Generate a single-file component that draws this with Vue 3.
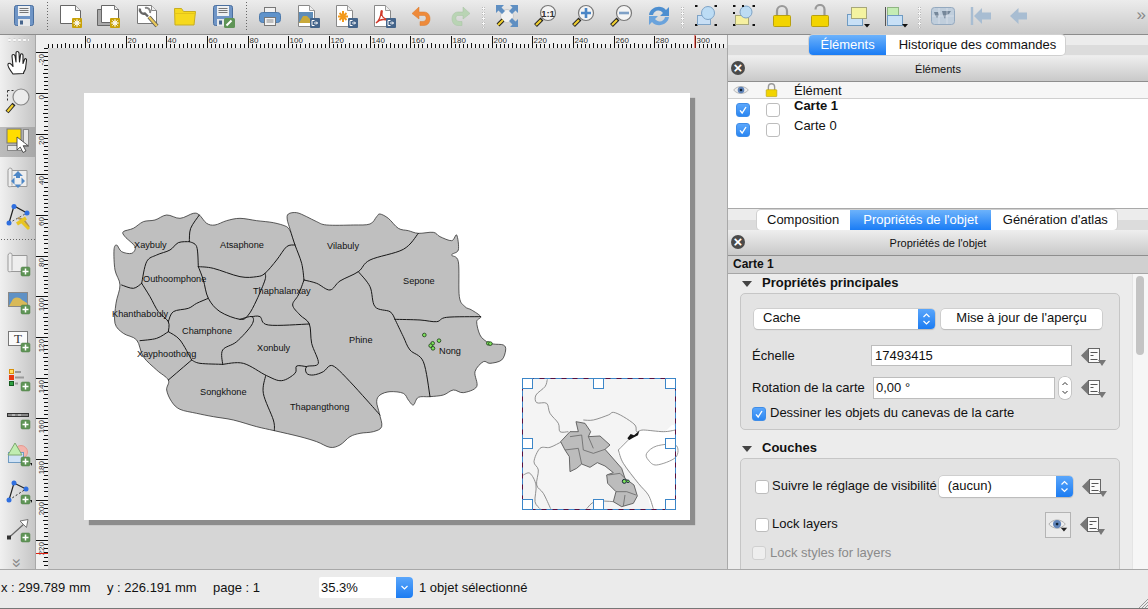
<template>
  <div class="app">
    <div class="toolbar">
      <template v-for="(it, i) in topItems" :key="i">
        <span v-if="it === '|'" class="sep-v"></span>
        <span v-else-if="it === ':'" class="grip-v"></span>
        <span v-else class="tool"><svg viewBox="0 0 24 24" width="24" height="24" v-html="icons[it]"></svg></span>
      </template>
      <span class="more">»</span>
    </div>

    <div class="main">
      <div class="lefttools">
        <span class="grip-h"></span>
        <template v-for="(it, i) in leftItems" :key="i">
          <span v-if="it === '|'" class="sep-h"></span>
          <span v-else class="ltool" :class="{ active: it === 'select' }"><svg viewBox="0 0 28 28" width="28" height="28" v-html="icons[it]"></svg></span>
        </template>
        <span class="chev">»</span>
      </div>

      <div class="workspace">
        <svg class="hruler" width="691" height="13">
          <line v-for="t in hTicks" :key="t.x" :x1="t.x" :x2="t.x" :y1="t.major ? 1 : t.mid ? 8 : 9" y2="13" stroke="#111" />
          <text v-for="t in hLabels" :key="t.mm" :x="t.x + 1.5" y="8" class="rtext">{{ t.mm }}</text>
          <line x1="659" x2="659" y1="0" y2="13" stroke="#e02010" />
        </svg>
        <div class="wsbody">
          <svg class="vruler" width="12" height="521">
            <line v-for="t in vTicks" :key="t.y" :y1="t.y" :y2="t.y" :x1="t.major ? 0 : t.mid ? 7 : 8" x2="12" stroke="#111" />
            <text v-for="t in vLabels" :key="t.mm" x="7.5" :y="t.y + 2" text-anchor="end" :transform="`rotate(-90 7.5 ${t.y + 2})`" class="rtext">{{ t.mm }}</text>
            <line x1="0" x2="12" y1="505.5" y2="505.5" stroke="#e02010" />
          </svg>
          <div class="canvas">
            <div class="sheet">
              <svg viewBox="84 93 606 427" width="606" height="427">
                <g transform="translate(100 200) scale(.33333)">
                  <path :d="smooth(outline, true)" fill="#bfbfbf" stroke="#333" stroke-width="2.4" stroke-linejoin="round" />
                  <path v-for="(b, i) in borders" :key="i" :d="smooth(b)" fill="none" stroke="#161616" stroke-width="3" stroke-linecap="round" />
                  <circle v-for="(d, i) in dots" :key="i" :cx="d[0]" :cy="d[1]" r="5.5" fill="#7fe35c" stroke="#1c3a18" stroke-width="2.4" />
                </g>
                <text v-for="l in labels" :key="l[0]" :x="l[1]" :y="l[2] + 3" class="maptext">{{ l[0] }}</text>

                <g transform="translate(510 370) scale(.33333)">
                  <rect x="37" y="25" width="460" height="393" fill="#f4f4f4" />
                  <path :d="smooth(sea, true)" fill="#fff" />
                  <path v-for="(b, i) in insetLines" :key="i" :d="smooth(b)" fill="none" stroke="#7f7f7f" stroke-width="2.6" />
                  <path :d="smooth(hainan, true)" fill="#fff" stroke="#8a8a8a" stroke-width="2.6" />
                  <path d="M352 205 L362 192 L372 196 L388 182 L384 196 L368 204 L358 210 Z" fill="#151515" />
                  <polygon :points="laos.join(' ')" fill="#bcbcbc" stroke="#555" stroke-width="2.6" stroke-linejoin="round" />
                  <polyline v-for="(b, i) in laosLines" :key="i" :points="b.join(' ')" fill="none" stroke="#666" stroke-width="2.4" />
                  <circle cx="343" cy="334" r="6" fill="#7fe35c" stroke="#123" stroke-width="3" />
                  <circle cx="354" cy="334" r="4" fill="#7fe35c" stroke="#123" stroke-width="2.4" />
                </g>
                <rect x="522.5" y="378.5" width="153" height="131" fill="none" stroke="#5a1040" />
                <rect x="522.5" y="378.5" width="153" height="131" fill="none" stroke="#3c86c8" stroke-dasharray="6 5" />
                <rect v-for="(h, i) in handles" :key="i" :x="h[0] + .5" :y="h[1] + .5" width="10" height="10" fill="#fff" stroke="#3c86c8" />
              </svg>
            </div>
          </div>
        </div>
      </div>

      <div class="panel">
        <div class="tabstrip first">
          <div class="tabs">
            <span class="tab on t-el">Éléments</span>
            <span class="tab t-hist">Historique des commandes</span>
          </div>
        </div>
        <div class="titlebar">
          <span class="closebtn">×</span>
          <span>Éléments</span>
        </div>
        <div class="items">
          <div class="items-head">
            <svg class="h-eye" viewBox="0 0 24 24" width="16" height="16" v-html="icons.eye"></svg>
            <svg class="h-lock" viewBox="0 0 24 24" width="15" height="16" v-html="icons.lock"></svg>
            <span class="h-el">Élément</span>
          </div>
          <div v-for="row in itemRows" :key="row.name" class="item-row">
            <span class="cb on"><svg viewBox="0 0 14 14"><path d="M3.5 7.5 L6 10.5 L10.5 3.5" /></svg></span>
            <span class="cb second"></span>
            <span class="item-name" :class="{ bold: row.bold }">{{ row.name }}</span>
          </div>
        </div>

        <div class="tabstrip second">
          <div class="tabs">
            <span class="tab t-comp">Composition</span>
            <span class="tab on t-prop">Propriétés de l'objet</span>
            <span class="tab t-gen">Génération d'atlas</span>
          </div>
        </div>
        <div class="titlebar">
          <span class="closebtn">×</span>
          <span>Propriétés de l'objet</span>
        </div>
        <div class="objbar">Carte 1</div>

        <div class="scrollarea">
          <div class="scrollcontent">
            <div class="grouphead"><span class="tri"></span><span class="gh">Propriétés principales</span></div>
            <div class="group g1">
              <div class="row r-cache">
                <span class="combo cache">Cache<span class="cend"><svg viewBox="0 0 17 20" width="17" height="20"><path d="M5.5 8 L8.5 5 L11.5 8 M5.5 12 L8.5 15 L11.5 12" /></svg></span></span>
                <span class="btn">Mise à jour de l'aperçu</span>
              </div>
              <div class="row r-scale">
                <span class="lab scale">Échelle</span>
                <span class="input wide">17493415</span>
                <svg class="dd" viewBox="0 0 25 22" width="25" height="22" v-html="icons.dd"></svg>
              </div>
              <div class="row r-rot">
                <span class="lab rot">Rotation de la carte</span>
                <span class="input mid">0,00 °</span>
                <span class="spin"><svg viewBox="0 0 12 22" width="12" height="22"><path d="M3.5 8 L6 5.5 L8.5 8 M3.5 14 L6 16.5 L8.5 14" /></svg></span>
                <svg class="dd d2" viewBox="0 0 25 22" width="25" height="22" v-html="icons.dd"></svg>
              </div>
              <div class="row r-draw">
                <span class="cb on"><svg viewBox="0 0 14 14"><path d="M3.5 7.5 L6 10.5 L10.5 3.5" /></svg></span>
                <span class="lab after up2">Dessiner les objets du canevas de la carte</span>
              </div>
            </div>

            <div class="grouphead second"><span class="tri"></span><span class="gh">Couches</span></div>
            <div class="group g2">
              <div class="row r-follow">
                <span class="cb"></span>
                <span class="lab after up3">Suivre le réglage de visibilité</span>
                <span class="combo aucun">(aucun)<span class="cend"><svg viewBox="0 0 17 21" width="17" height="21"><path d="M5.5 8.5 L8.5 5.5 L11.5 8.5 M5.5 12.5 L8.5 15.5 L11.5 12.5" /></svg></span></span>
                <svg class="dd" viewBox="0 0 25 22" width="25" height="22" v-html="icons.dd"></svg>
              </div>
              <div class="row r-lock">
                <span class="cb"></span>
                <span class="lab after up4">Lock layers</span>
                <span class="eyebtn"><svg viewBox="0 0 24 24" width="22" height="22" v-html="icons.eyemenu"></svg></span>
                <svg class="dd" viewBox="0 0 25 22" width="25" height="22" v-html="icons.dd"></svg>
              </div>
              <div class="row r-styles">
                <span class="cb off"></span>
                <span class="lab after dim">Lock styles for layers</span>
              </div>
            </div>
          </div>
          <div class="scrollbar"><span class="thumb"></span></div>
        </div>
      </div>
    </div>

    <div class="status">
      <span class="st">x : 299.789 mm</span>
      <span class="st">y : 226.191 mm</span>
      <span class="st">page : 1</span>
      <span class="zoomcombo">35.3%<span class="zend"><svg viewBox="0 0 17 21" width="17" height="21"><path d="M5.5 9 L8.5 12 L11.5 9" /></svg></span></span>
      <span class="st-sel">1 objet sélectionné</span>
      <svg class="sizegrip" viewBox="0 0 10 10" width="10" height="10"><path d="M1 10 L10 1 M4 10 L10 4 M7 10 L10 7" /></svg>
    </div>
  </div>
</template>

<script setup>
const topItems = ['save', '|', 'newc', 'dup', 'manage', 'folder', 'saveas', '|', 'print', 'eimg', 'esvg', 'epdf', 'undo', 'redo', ':', 'zfull', 'z11', 'zin', 'zout', 'refresh', ':', 'group', 'ungroup', 'lock', 'unlock', 'raise', 'align', ':', 'atlas', 'first', 'prev']
const leftItems = ['hand', 'zoomtool', 'select', 'movec', 'nodes', '|', 'addmap', 'addimg', 'addtext', 'legend', 'scalebar', 'shape', 'addnodes', 'arrow']

// --- icons ---
const floppy = `<rect x="2.5" y="1.5" width="19" height="20" rx="2" fill="#6f95c6" stroke="#4b6f9e"/><rect x="6" y="2" width="12" height="10" fill="#eef0f2"/><path d="M7.5 4.5h9M7.5 6.5h9M7.5 8.5h9" stroke="#777"/><rect x="6" y="15" width="12" height="7" fill="#e6e8ea"/><rect x="8" y="16.5" width="3" height="4" fill="#47658c"/>`
const doc = (x = 1) => `<path d="M${x + .5} 1.5h15l5 5v13h-20z" fill="#fff" stroke="#666"/><path d="M${x + 15.5} 1.5v5h5" fill="#eee" stroke="#777"/>`
const gear = `<rect x="13" y="14" width="10" height="10" rx="1" fill="#c9a208"/><circle cx="18" cy="19" r="2" fill="none" stroke="#fff"/><path d="M18 15v8M14 19h8M15.2 16.2l5.6 5.6M20.8 16.2l-5.6 5.6" stroke="#fff" stroke-width=".8"/>`
const exportBadge = `<rect x="14" y="14" width="10" height="10" rx="1" fill="#44648a"/><path d="M18.5 16.5h-2.5v5h2.5M18 19h3.5M20 17.5l1.5 1.5l-1.5 1.5" fill="none" stroke="#fff"/>`
const smallDoc = `<path d="M2.5 1.5h11l5 5v16h-16z" fill="#fff" stroke="#888"/><path d="M13.5 1.5v5h5" fill="#eee" stroke="#999"/>`
const lens = (inner) => `<path d="M9 15L2.5 21.5" stroke="#222" stroke-width="4"/><path d="M8 16L3 21" stroke="#f0cf30" stroke-width="2.2"/><circle cx="15" cy="9" r="7.5" fill="#f4f4f4" stroke="#777" stroke-width="1.2"/>${inner}`
const lockBody = `<rect x="3.5" y="11.5" width="17" height="11" rx="1" fill="#f2d400" stroke="#b8a010"/>`
const corners = `<path d="M1 2h2.5M20.5 2h2.5M1 21h2.5M20.5 21h2.5" stroke="#111" stroke-width="2"/>`
const plus = (x = 17, y = 17) => `<rect x="${x}" y="${y}" width="9" height="9" rx="1.5" fill="#5f9456" stroke="#4d7d46" stroke-width=".5"/><path d="M${x + 4.5} ${y + 1.5}v6M${x + 1.5} ${y + 4.5}h6" stroke="#fff" stroke-width="1.5"/>`
const paper = `<path d="M4 5.5c0-3 4-3 4-1v1h15v16h-15c-2 0-4 1-4-1z" fill="#eee" stroke="#999"/><path d="M8 5.5v15" stroke="#aaa"/>`
const blueNode = (x, y) => `<circle cx="${x}" cy="${y}" r="2.5" fill="#2f6fe0"/>`

const icons = {
  save: floppy,
  newc: doc() + gear,
  dup: `<path d="M.5 5.5h15l5 5v11h-20z" fill="#aaa" stroke="#666"/><path d="M4.5 1.5h13l4 4v13h-17z" fill="#fff" stroke="#666"/><path d="M17.5 1.5v4h4" fill="#eee" stroke="#777"/>` + gear,
  manage: `<path d="M2.5 1.5h14l5 5v13h-19z" fill="#fff" stroke="#777"/><path d="M16.5 1.5v5h5" fill="#eee" stroke="#888"/><path d="M5 4.5a4 4 0 0 0 5 5l3 3" fill="none" stroke="#666" stroke-width="2.4"/><path d="M10 4a4 4 0 0 1 5 5" fill="none" stroke="#888" stroke-width="2"/><path d="M14 13l8 9" stroke="#555" stroke-width="4"/><path d="M14 13l8 9" stroke="#e8c85a" stroke-width="2.4"/>`,
  folder: `<path d="M1.5 4.5h7l2 3h12l-1.500 13.500h-19z" fill="#f6d91e" stroke="#c7ad22"/><path d="M1.5 9.5h21" stroke="#e4c41a"/>`,
  saveas: floppy + `<rect x="13" y="14" width="11" height="10" rx="1.5" fill="#5f9456"/><path d="M15.5 21.5l5-5" stroke="#fff" stroke-width="2"/>`,
  print: `<rect x="6.5" y="3.5" width="11" height="7" fill="#f2f2f2" stroke="#777"/><rect x="1.5" y="8.5" width="21" height="10" rx="3" fill="#5f93cb" stroke="#4c79ab"/><rect x="6.5" y="13.5" width="11" height="8" fill="#f3f3f3" stroke="#777"/><path d="M8.5 16h7M8.5 18h7" stroke="#888"/>`,
  eimg: smallDoc + `<rect x="3" y="8" width="14" height="11" fill="#5f8db8"/><path d="M3 19l4-7h4l3 3l3 1v3z" fill="#c9a93a"/>` + exportBadge,
  esvg: smallDoc + `<path d="M9 7v11M4 12.5h10M5.5 9l7 7M12.5 9l-7 7" stroke="#f39a1c" stroke-width="2"/>` + exportBadge,
  epdf: smallDoc + `<path d="M4 19c3-2 5-7 5-11c0-2 2-2 1 1c-1 3 2 6 5 6c2 0 1 2-1 1c-3-1-7 0-10 3z" fill="none" stroke="#d0392b" stroke-width="1.3"/>` + exportBadge,
  undo: `<path d="M9 3L2 9.5L9 15v-3.5h5c3 0 3 6-1 6h-3v4h4c8 0 8-13.5 0-13.5h-5z" fill="#ee8a3a" stroke="#d87a2c" stroke-width=".5"/>`,
  redo: `<path d="M15 3l7 6.5L15 15v-3.5h-5c-3 0-3 6 1 6h3v4h-4c-8 0-8-13.5 0-13.5h5z" fill="#b9d4b4" stroke="#a6c3a2" stroke-width=".5"/>`,
  zfull: `<circle cx="12" cy="12" r="6.5" fill="#f2f2f2" stroke="#ccc"/><path d="M1 1h8l-2.5 2.5L10 7L7 10L3.5 6.5L1 9zM23 1v8l-2.5-2.5L17 10L14 7l3.5-3.5L15 1zM23 23h-8l2.5-2.5L14 17l3-3l3.5 3.5L23 15z" fill="#5f8fc2"/><path d="M8 16L3 21" stroke="#222" stroke-width="4"/><path d="M8 16L3 21" stroke="#f0cf30" stroke-width="2"/>`,
  z11: lens(`<text x="15" y="12.5" text-anchor="middle" font-family="Liberation Sans, sans-serif" font-size="9.5" font-weight="700" fill="#333">1:1</text>`),
  zin: lens(`<path d="M15 4v10M10 9h10" stroke="#4b86c6" stroke-width="2.6"/>`),
  zout: lens(`<path d="M10 9h10" stroke="#7ea0c6" stroke-width="2.6"/>`),
  refresh: `<path d="M2 11C3 3 14 0 19 6l3-3v9h-9l3-3c-3-4-9-3-10 2z" fill="#4e8fd0"/><path d="M22 13c-1 8-12 11-17 5l-3 3v-9h9l-3 3c3 4 9 3 10-2z" fill="#6aa3dc"/>`,
  group: corners + `<rect x="3.5" y="11.5" width="13" height="9" fill="#c8dff5" stroke="#7ea3c6"/><circle cx="14" cy="9" r="6.5" fill="#bcdcf4" stroke="#7ea3c6"/>`,
  ungroup: corners + `<rect x="3.5" y="11.5" width="13" height="9" fill="#f6f0a0" stroke="#a8a878"/><circle cx="14" cy="8" r="6" fill="#bcdcf4" stroke="#7ea3c6"/><path d="M1 9h2M10 2h2" stroke="#111" stroke-width="2"/>`,
  lock: `<path d="M7 12V7a5 5 0 0 1 10 0v5" fill="none" stroke="#999" stroke-width="2.2"/>` + lockBody,
  unlock: `<path d="M7.5 5.5a4.5 4.5 0 0 1 9 0v6.5h-3" fill="none" stroke="#999" stroke-width="2.2"/>` + lockBody,
  raise: `<rect x="1.5" y="10.5" width="15" height="11" fill="#c8e0f6" stroke="#6f9bc2"/><rect x="5.5" y="3.5" width="15" height="11" fill="#f4f3a0" stroke="#a7a77a"/><path d="M18 20h6l-3 3.5z" fill="#111"/>`,
  align: `<path d="M1.5 3v19" stroke="#555"/><rect x="3.5" y="3.5" width="11" height="8" fill="#c4ecb4" stroke="#8fb582"/><rect x="3.5" y="11.5" width="15" height="10" fill="#c8e0f6" stroke="#6f9bc2"/><path d="M18 20h6l-3 3.5z" fill="#111"/>`,
  atlas: `<rect x=".5" y="3.5" width="23" height="17" rx="3" fill="#c0cedc" stroke="#94a9bf"/><path d="M3 8h4l1 3l-2 3l-2-3zM11 7h9l-2 3l-3 1l-1 4l-2-4z" fill="#75879a"/><path d="M8 4v16M16 4v16M1 12h22" stroke="#e0e8f0" stroke-width=".6"/>`,
  first: `<path d="M3 3v18" stroke="#a8bdd2" stroke-width="2.4"/><path d="M5 12l8-8v4.5h9v7h-9V20z" fill="#a8bdd2"/>`,
  prev: `<path d="M3 12l8.5-8v4.5H20v7h-8.5V20z" fill="#a8bdd2"/>`,
  hand: `<path d="M9 26C6 22 3 18 4 16c1-1.5 3-.5 5 2.5L8 8c0-2 2.5-2 3 0l1 6V5c0-2 2.5-2 3 0l.5 9l1-7c.3-2 2.5-1.5 2.5.5v8l1.5-4c.7-1.5 2.5-1 2 1l-1 8c-.3 2-2 3-2 5z" fill="#fff" stroke="#222" stroke-width="1.1" stroke-linejoin="round"/>`,
  zoomtool: `<path d="M3.5 3.5h8M3.5 3.5v12" stroke="#333" stroke-dasharray="2 2" fill="none"/><path d="M10 17L3 25" stroke="#222" stroke-width="4"/><path d="M9 18L3.5 24.5" stroke="#f0cf30" stroke-width="2.2"/><circle cx="17" cy="10" r="8" fill="#ececec" stroke="#888" stroke-width="1.2"/>`,
  select: `<rect x="3.5" y="19.5" width="14" height="5" fill="#e6e6e6" stroke="#888"/><rect x="19.5" y="3.5" width="5" height="17" fill="#e6e6e6" stroke="#888"/><rect x="3" y="3" width="14" height="14" fill="#ffdd00" stroke="#777"/><path d="M13 11v13l3.200-3l2.800 5.500l3-1.500l-2.800-5.300h5z" fill="#fff" stroke="#333" stroke-width=".8"/>`,
  movec: paper + `<path d="M14 6l5 5h-3v2h-4v-2H9zM7 16l3.5-3.5v7zM21 16l-3.5-3.5v7zM14 23l-3.5-3.5h7z" fill="#4d87c7"/>`,
  nodes: `<path d="M5 19L10 2l13 7" fill="none" stroke="#222" stroke-width="1.2"/><path d="M5 19l18-10" stroke="#555" stroke-dasharray="2 2"/><path d="M14 14l6 2l5 7" stroke="#b09050" stroke-width="2" fill="none"/><path d="M13 20l9-6" stroke="#e8c520" stroke-width="3.5" fill="none"/><path d="M17 17l8 8" stroke="#e8c520" stroke-width="3" fill="none"/>` + blueNode(5, 19) + blueNode(10, 2.5) + blueNode(23, 9),
  addmap: paper + plus(),
  addimg: `<rect x="4.5" y="4.5" width="19" height="14" fill="#5f91c5" stroke="#888"/><path d="M5 18l4-7c3-2 6-2 9 1l5 3v3z" fill="#d8b958"/>` + plus(),
  addtext: `<rect x="4.5" y="5.5" width="19" height="14" fill="#fbfbfb" stroke="#777"/><text x="14" y="17" text-anchor="middle" font-family="Liberation Serif, serif" font-size="13" fill="#333">T</text>` + plus(),
  legend: `<rect x="5.5" y="4.5" width="4" height="4" fill="#ffe066" stroke="#d8900a"/><rect x="5" y="10" width="5" height="5" fill="#e83a12"/><rect x="5.5" y="16.5" width="4" height="4" fill="#2ea040" stroke="#145a20"/><path d="M11 7h6M11 12.5h9M11 18.5h3" stroke="#999" stroke-width="2"/>` + plus(),
  scalebar: `<rect x="3.5" y="10.5" width="21" height="3" fill="#888" stroke="#333"/><path d="M8 12h3M14 12h3" stroke="#ddd"/>` + plus(),
  shape: `<circle cx="17" cy="11" r="6.5" fill="#f3b4ac" stroke="#e59a90"/><rect x="4.5" y="11.5" width="15" height="10" fill="#cfe2f5" stroke="#6f9bc2"/><path d="M11 2l7 12H4z" fill="#c0edb0" stroke="#7ea870"/>` + plus(17, 16) + `<path d="M26 22h4l-2 3z" fill="#111"/>`,
  addnodes: `<path d="M5 21L10 4l12 6" fill="none" stroke="#222" stroke-width="1.2"/><path d="M5 21l17-11" stroke="#333" stroke-dasharray="2 2"/>` + blueNode(5, 21) + blueNode(10, 4) + blueNode(22, 10) + plus(17, 16) + `<path d="M26 21h4l-2 3z" fill="#111"/>`,
  arrow: `<path d="M5 20.5L20 7" stroke="#666" stroke-width="1.2"/><rect x="3" y="18.5" width="4" height="4" fill="#333"/><path d="M16 4l8-1.5l-1.5 8z" fill="#fff" stroke="#777"/>` + plus(17, 16),
  eye: `<path d="M1 12c6-7 16-7 22 0c-6 7-16 7-22 0z" fill="#eee" stroke="#999"/><circle cx="12" cy="12" r="5" fill="#5f83b8"/><circle cx="12" cy="12" r="2" fill="#123"/>`,
  eyemenu: `<path d="M2 11c5-6 13-6 18 0c-5 6-13 6-18 0z" fill="#eee" stroke="#aaa"/><circle cx="11" cy="11" r="4.5" fill="#5f83b8"/><circle cx="11" cy="11" r="1.5" fill="#123"/><path d="M15 15h7l-3.5 4z" fill="#222"/>`,
  dd: `<path d="M0 10.5L7 3.5V17.5z" fill="#777"/><rect x="7.5" y="3.5" width="11" height="14" fill="#fafafa" stroke="#666"/><path d="M9.5 7.5h7M9.5 10.5h3M9.5 14.5h7" stroke="#555"/><path d="M17 15h8l-4 6z" fill="#777"/>`
}

// --- rulers (2.033 px per mm) ---
const scale = 2.033
const hTicks = []
for (let mm = -18; mm <= 316; mm += 2) hTicks.push({ x: Math.round(49 + mm * scale) + 0.5, major: mm % 20 === 0, mid: mm % 10 === 0 })
const hLabels = []
for (let mm = 0; mm <= 300; mm += 20) hLabels.push({ mm, x: Math.round(49 + mm * scale) })
const vTicks = []
for (let mm = -22; mm <= 234; mm += 2) vTicks.push({ y: Math.round(45 + mm * scale) + 0.5, major: mm % 20 === 0, mid: mm % 10 === 0 })
const vLabels = []
for (let mm = -20; mm <= 220; mm += 20) vLabels.push({ mm, y: Math.round(45 + mm * scale) })

// --- map data, in coordinates of a 3x crop ---
const east = (a) => a.map(([x, y]) => [x + 720, y])
const outline = [
  [298, 45], [320, 70], [345, 75], [380, 62], [420, 55], [470, 62], [520, 68], [560, 80], [572, 95], [562, 60], [565, 42], [590, 38], [620, 50], [650, 65], [680, 75], [760, 75], [810, 72], [830, 50],
  ...east([[120, 42], [145, 55], [175, 85], [205, 92], [235, 100], [280, 97], [300, 110], [335, 122], [350, 105], [355, 150], [335, 165], [355, 185], [358, 290], [375, 320], [395, 330], [422, 350], [410, 365], [420, 405], [440, 425], [460, 432], [490, 435], [497, 450], [485, 480], [450, 490], [430, 485], [405, 515], [410, 560], [370, 578], [340, 570], [310, 585], [270, 590], [235, 592], [220, 615], [205, 600], [190, 580], [150, 575], [120, 585], [110, 605], [118, 640], [125, 680], [100, 695], [60, 700], [30, 710]]),
  [720, 735], [690, 742], [650, 725], [600, 710], [523, 692], [470, 680], [400, 660], [340, 650], [290, 640], [240, 628], [215, 605], [200, 570], [205, 540], [170, 510], [130, 470], [110, 420], [70, 400], [45, 370], [48, 310], [60, 255], [45, 210], [42, 150], [50, 135], [65, 155], [95, 160], [105, 140], [75, 110], [70, 95], [100, 85], [130, 65], [165, 60], [200, 45], [240, 55], [280, 40]
]
const borders = [
  [[298, 45], [272, 85], [268, 125]],
  [[268, 125], [235, 128], [210, 150], [170, 165], [140, 185], [125, 250]],
  [[125, 250], [100, 265], [65, 255]],
  [[268, 125], [290, 140], [295, 200]],
  [[295, 200], [340, 205], [420, 230], [470, 230], [495, 220], [530, 180], [560, 140], [585, 135]],
  [[572, 95], [585, 135], [605, 190], [612, 240]],
  [[295, 200], [310, 240], [325, 295], [360, 335], [420, 358], [445, 345], [470, 300], [495, 240], [495, 220]],
  [[325, 295], [290, 310], [265, 325], [220, 335], [205, 365]],
  [[125, 250], [150, 290], [175, 335], [205, 365], [205, 395]],
  [[205, 395], [170, 415], [120, 422]],
  [[205, 395], [240, 420], [275, 480]],
  [[275, 480], [205, 540]],
  [[275, 480], [300, 490], [368, 493]],
  [[368, 493], [368, 450], [410, 425], [455, 375], [456, 350], [420, 358]],
  [[456, 350], [480, 350], [505, 375], [628, 372]],
  [[612, 240], [595, 285], [578, 315], [600, 345], [628, 372], [635, 430], [655, 490], [620, 500], [620, 520], [640, 525], [670, 515], [690, 497], [710, 505], [750, 545], [800, 600], [840, 645]],
  [[368, 493], [430, 490], [500, 527], [545, 542], [585, 520], [590, 498], [620, 500]],
  [[497, 527], [490, 580], [520, 660], [523, 692]],
  [[612, 240], [650, 250], [690, 270], ...east([[0, 243], [55, 215], [90, 180], [190, 148], [235, 100]])],
  east([[55, 215], [90, 260], [105, 320], [150, 335], [165, 358]]),
  east([[165, 358], [240, 360], [290, 365], [320, 352], [422, 350]]),
  east([[165, 358], [190, 410], [210, 450], [250, 485], [270, 590]])
]
const dots = east([[253, 405], [278, 430], [297, 422], [272, 437], [279, 445], [445, 430], [451, 431]])
const labels = [
  ['Xaybuly', 134, 245], ['Atsaphone', 220, 245], ['Vilabuly', 327, 246], ['Sepone', 403, 281], ['Outhoomphone', 143, 279],
  ['Thaphalanxay', 253, 291], ['Khanthabouly', 112, 314], ['Phine', 349, 340], ['Champhone', 182, 331], ['Xonbuly', 257, 348],
  ['Nong', 439, 351], ['Xayphoothong', 137, 354], ['Songkhone', 200, 392], ['Thapangthong', 290, 407]
]
const sea = [[497, 180], [460, 185], [400, 180], [360, 205], [325, 240], [335, 270], [380, 330], [410, 370], [430, 418], [497, 418]]
const hainan = [[410, 250], [440, 228], [497, 225], [497, 262], [440, 285], [415, 270]]
const insetLines = [
  [[112, 28], [105, 50], [78, 75], [80, 98], [110, 100], [120, 130], [145, 160], [150, 185], [175, 185]],
  [[220, 150], [250, 150], [295, 135], [310, 127], [340, 140], [375, 165], [380, 185], [400, 180], [460, 185], [497, 180]],
  [[155, 215], [120, 232], [90, 235], [72, 275], [85, 300], [80, 345], [100, 370], [122, 416]],
  [[40, 315], [60, 310], [78, 345], [75, 395], [90, 416]],
  [[230, 416], [255, 395], [310, 395], [330, 402]],
  [[325, 240], [340, 280], [385, 340], [415, 375], [430, 416]],
  [[325, 240], [360, 205]]
]
const laos = [[198, 155], [225, 160], [242, 185], [235, 200], [270, 198], [300, 225], [285, 238], [300, 255], [335, 295], [345, 325], [372, 345], [382, 378], [370, 400], [335, 410], [310, 395], [318, 365], [293, 340], [290, 315], [310, 308], [285, 288], [262, 278], [240, 292], [215, 282], [200, 295], [180, 305], [178, 260], [165, 240], [152, 215], [180, 185], [205, 185]]
const laosLines = [
  [[180, 200], [215, 195], [220, 240], [250, 250], [285, 238]],
  [[165, 240], [205, 235], [215, 282]],
  [[235, 200], [250, 235]],
  [[295, 315], [330, 310], [345, 325]],
  [[318, 365], [350, 365], [378, 375]],
  [[345, 375], [340, 408]]
]
const handles = [[522, 378], [593, 378], [665, 378], [522, 438], [665, 438], [522, 499], [593, 499], [665, 499]]

const itemRows = [{ name: 'Carte 1', bold: true }, { name: 'Carte 0', bold: false }]

// catmull-rom through the points, so the borders keep their kinks
function smooth(p, closed = false) {
  const n = p.length
  const at = (i) => (closed ? p[(i + n) % n] : p[Math.max(0, Math.min(n - 1, i))])
  let d = `M${p[0][0]} ${p[0][1]}`
  const segs = closed ? n : n - 1
  for (let i = 0; i < segs; i++) {
    const [a, b, c, e] = [at(i - 1), at(i), at(i + 1), at(i + 2)]
    const c1 = [b[0] + (c[0] - a[0]) / 6, b[1] + (c[1] - a[1]) / 6]
    const c2 = [c[0] - (e[0] - b[0]) / 6, c[1] - (e[1] - b[1]) / 6]
    d += `C${c1[0].toFixed(1)} ${c1[1].toFixed(1)} ${c2[0].toFixed(1)} ${c2[1].toFixed(1)} ${c[0]} ${c[1]}`
  }
  return closed ? d + 'Z' : d
}
</script>

<style scoped>
.app {
  width: 1148px;
  height: 609px;
  overflow: hidden;
  display: flex;
  flex-direction: column;
  background: #ececec;
  font-family: "Liberation Sans", Arial, sans-serif;
  font-size: 13px;
  color: #111;
}

/* top toolbar */
.toolbar {
  height: 34px;
  flex: none;
  box-sizing: content-box;
  display: flex;
  align-items: center;
  padding-left: 5px;
  position: relative;
  background: linear-gradient(#ececec, #c9c9c9);
  border-bottom: 1px solid #8c8c8c;
}
.tool {
  width: 38px;
  flex: none;
  display: flex;
  justify-content: center;
  margin-top: -2px;
}
.sep-v {
  width: 9px;
  height: 30px;
  flex: none;
  background: repeating-linear-gradient(#666 0 1px, transparent 1px 3px) 4px 0 / 1px 100% no-repeat;
}
.grip-v {
  width: 9px;
  height: 22px;
  flex: none;
  background: radial-gradient(circle, #f8f8f8 1.2px, #bbb 1.4px, transparent 2px) 2px 0 / 5px 5px repeat-y;
}
.more {
  position: absolute;
  right: 2px;
  top: 5px;
  font-size: 17px;
  line-height: 20px;
  color: #888;
}

.main {
  flex: 1;
  display: flex;
  min-height: 0;
}

/* left toolbar */
.lefttools {
  width: 35px;
  flex: none;
  display: flex;
  flex-direction: column;
  align-items: center;
  position: relative;
  background: linear-gradient(90deg, #f0f0f0, #c6c6c6);
  border-right: 1px solid #a8a8a8;
}
.grip-h {
  width: 22px;
  height: 7px;
  margin: 3px 0 -2.5px;
  flex: none;
  background: radial-gradient(circle, #f8f8f8 1.1px, #c4c4c4 1.3px, transparent 2px) 0 0 / 5px 4px repeat-x;
}
.ltool {
  width: 35px;
  height: 39px;
  flex: none;
  display: flex;
  align-items: center;
  justify-content: center;
}
.sep-h ~ .ltool {
  height: 38.2px;
}
.ltool.active {
  background: linear-gradient(90deg, #bcbcbc, #a8a8a8) 0 6.5px / 100% 30px no-repeat;
}
.sep-h {
  width: 34px;
  height: 7.5px;
  flex: none;
  background: repeating-linear-gradient(90deg, #666 0 1px, transparent 1px 3px) 0 1px / 100% 1px no-repeat;
}
.chev {
  position: absolute;
  left: 12px;
  bottom: -1px;
  font-size: 17px;
  line-height: 14px;
  color: #888;
  transform: rotate(90deg);
}

/* canvas + rulers */
.workspace {
  width: 691px;
  flex: none;
  display: flex;
  flex-direction: column;
}
.hruler {
  display: block;
  flex: none;
  background: #f0f0f0;
}
.rtext {
  font-size: 8px;
  fill: #333;
}
.wsbody {
  flex: 1;
  display: flex;
  min-height: 0;
}
.vruler {
  display: block;
  flex: none;
  background: #f0f0f0;
}
.canvas {
  flex: 1;
  background: #d6d6d6;
  padding: 45px 0 0 36px;
  overflow: hidden;
}
.sheet {
  width: 606px;
  height: 427px;
  background: #fff;
  box-shadow: 5px 5px 1px #8d8d8d;
}
.sheet svg {
  display: block;
}
.maptext {
  font-size: 9.2px;
  fill: #111;
}

/* right panel */
.panel {
  flex: 1;
  min-width: 0;
  display: flex;
  flex-direction: column;
  border-left: 1px solid #a9a9a9;
  background: #ececec;
}
.tabstrip {
  flex: none;
  position: relative;
  background: linear-gradient(transparent 10px, #dcdcdc 10px);
  display: flex;
}
.tabstrip.first {
  height: 20px;
  margin-bottom: 1px;
  padding-left: 81px;
}
.tabstrip.second {
  height: 20px;
  margin-top: 1px;
  padding-left: 29px;
}
.tabs {
  display: flex;
  height: 20px;
  background: #fff;
  border-radius: 4px;
  overflow: hidden;
  box-shadow: 0 0 0 1px #d0d0d0;
}
.tab {
  line-height: 19px;
}
.tab.on {
  color: #fff;
  background: linear-gradient(#6cb2fb, #1a7cf5);
}
.tab.t-el {
  padding: 0 11.5px;
}
.tab.t-hist {
  padding: 0 8.5px 0 12.5px;
}
.tab.t-comp {
  padding: 0 11px 0 10px;
}
.tab.t-prop {
  padding: 0 13px;
}
.tab.t-gen {
  padding: 0 9px 0 12px;
}
.titlebar {
  height: 25px;
  flex: none;
  position: relative;
  display: flex;
  align-items: center;
  justify-content: center;
  font-size: 11px;
  background: linear-gradient(#eeeeee, #c9c9c9);
  border-bottom: 1px solid #8e8e8e;
}
.closebtn {
  position: absolute;
  left: 3px;
  top: 5px;
  width: 14px;
  height: 14px;
  border-radius: 50%;
  background: #4a4a4a;
  color: #fff;
  font-size: 15px;
  font-weight: 700;
  line-height: 14px;
  text-align: center;
}

.items {
  height: 126px;
  flex: none;
  background: #fff;
  border-bottom: 1px solid #a9a9a9;
}
.items-head {
  height: 16px;
  display: flex;
  align-items: center;
  background: #f6f6f6;
  border-bottom: 1px solid #cfcfcf;
  position: relative;
}
.h-eye {
  margin-left: 5px;
}
.h-lock {
  margin-left: 15px;
}
.h-el {
  margin-left: 15px;
}
.item-row {
  height: 20px;
  display: flex;
  align-items: flex-start;
}
.item-row .cb {
  margin: 4px 0 0 8px;
}
.item-row .cb.second {
  margin-left: 16px;
}
.item-name {
  margin-left: 14px;
  line-height: 13px;
}
.item-name.bold {
  font-weight: 700;
}

.cb {
  width: 14px;
  height: 14px;
  flex: none;
  box-sizing: border-box;
  border-radius: 3px;
  background: #fff;
  border: 1px solid #bdbdbd;
  display: block;
}
.cb.on {
  background: linear-gradient(#5aa6fb, #2a86f2);
  border-color: #3f8de8;
}
.cb.on svg {
  display: block;
  width: 12px;
  height: 12px;
}
.cb.on path {
  fill: none;
  stroke: #fff;
  stroke-width: 1.6;
}
.cb.off {
  background: #eeeeee;
  border-color: #d0d0d0;
}

.objbar {
  height: 18px;
  flex: none;
  box-sizing: border-box;
  padding-left: 5px;
  line-height: 17px;
  font-size: 12px;
  font-weight: 700;
  background: #d0d0d0;
  border-bottom: 1px solid #a6a6a6;
}

.scrollarea {
  flex: 1;
  min-height: 0;
  display: flex;
  overflow: hidden;
}
.scrollcontent {
  width: 404px;
  flex: none;
  padding: 0 0 0 12px;
  box-sizing: border-box;
}
.grouphead {
  height: 19px;
  display: flex;
  align-items: center;
  font-weight: 700;
}
.grouphead.second {
  height: 28px;
  padding-top: 8px;
  box-sizing: border-box;
}
.gh {
  margin-top: -2px;
}
.tri {
  width: 0;
  height: 0;
  margin: 1px 10px 0 2px;
  border-left: 5.5px solid transparent;
  border-right: 5.5px solid transparent;
  border-top: 6px solid #444;
}
.group {
  width: 380px;
  box-sizing: border-box;
  background: #e3e3e3;
  border: 1px solid #c6c6c6;
  border-radius: 5px;
  padding-left: 11px;
}
.g1 {
  height: 137px;
  padding-top: 15px;
}
.g2 {
  height: 140px;
  padding-top: 17px;
}
.row {
  display: flex;
  align-items: center;
}
.r-cache {
  height: 20px;
  margin-left: 2px;
}
.combo {
  position: relative;
  display: block;
  background: #fff;
  border-radius: 4px;
  box-shadow: 0 0 0 .5px #bbb, 0 1px 1px #bbb;
  box-sizing: border-box;
}
.cache {
  width: 181px;
  height: 20px;
  line-height: 18px;
  padding-left: 9px;
}
.aucun {
  width: 134px;
  height: 21px;
  line-height: 19px;
  padding-left: 9px;
  margin-left: 2px;
}
.cend {
  position: absolute;
  right: 0;
  top: 0;
  bottom: 0;
  width: 17px;
  border-radius: 0 4px 4px 0;
  background: linear-gradient(#5aa6fb, #1c7cf2);
}
.cend svg,
.zend svg {
  display: block;
}
.cend path,
.zend path {
  fill: none;
  stroke: #fff;
  stroke-width: 1.2;
}
.btn {
  width: 161px;
  height: 20px;
  margin-left: 6px;
  background: #fff;
  border-radius: 4px;
  box-shadow: 0 0 0 .5px #bbb, 0 1px 1px #bbb;
  text-align: center;
  line-height: 18px;
}
.r-scale {
  margin-top: 16px;
  height: 21px;
}
.lab.scale {
  width: 119px;
  flex: none;
  margin-top: -1px;
}
.input {
  display: block;
  height: 21px;
  box-sizing: border-box;
  background: #fff;
  border: 1px solid #bdbdbd;
  padding-left: 2px;
  line-height: 20px;
}
.input.wide {
  width: 201px;
  padding-left: 3px;
}
.dd {
  margin-left: 9px;
  flex: none;
}
.r-rot {
  margin-top: 11px;
  height: 22px;
}
.lab.rot {
  width: 121px;
  flex: none;
  margin-top: -1px;
}
.input.mid {
  width: 182px;
  height: 22px;
}
.spin {
  width: 12px;
  height: 22px;
  margin-left: 4px;
  background: #fff;
  border-radius: 5px;
  box-shadow: 0 0 0 .5px #aaa;
}
.spin svg {
  display: block;
}
.spin path {
  fill: none;
  stroke: #333;
}
.dd.d2 {
  margin-left: 10px;
}
.r-draw {
  margin-top: 6px;
}
.lab.after {
  margin-left: 4px;
  white-space: nowrap;
}
.lab.up2 {
  margin-bottom: 2px;
}
.lab.up3 {
  margin-bottom: 3px;
  margin-left: 3px;
}
.lab.up4 {
  margin-bottom: 4px;
  margin-left: 3px;
}
.r-follow {
  margin-left: 3px;
  height: 21px;
}
.r-lock {
  margin-left: 3px;
  margin-top: 15px;
  height: 26px;
}
.eyebtn {
  margin-left: auto;
  width: 26px;
  height: 26px;
  box-sizing: border-box;
  border: 1px solid #b4b4b4;
  background: #eaeaea;
  display: flex;
  align-items: center;
  justify-content: center;
}
.r-lock .dd {
  margin-right: 14px;
}
.r-styles {
  margin-top: 7px;
}
.dim {
  color: #8a8a8a;
}
.scrollbar {
  flex: 1;
  background: #f6f6f6;
  border-left: 1px solid #e4e4e4;
  padding: 2px 4px 0 3px;
}
.thumb {
  display: block;
  height: 79px;
  border-radius: 4px;
  background: #c4c4c4;
}

/* status bar */
.status {
  height: 40px;
  flex: none;
  box-sizing: border-box;
  position: relative;
  display: flex;
  align-items: center;
  padding: 0 0 4px 1px;
  background: #ebebeb;
  border-top: 1px solid #a8a8a8;
  border-bottom: 1px solid #777;
}
.st {
  width: 106px;
  flex: none;
}
.zoomcombo {
  width: 94px;
  height: 21px;
  flex: none;
  position: relative;
  background: #fff;
  line-height: 21px;
  padding-left: 2px;
  box-sizing: border-box;
  border-radius: 2px 4px 4px 2px;
}
.zend {
  position: absolute;
  right: 0;
  top: 0;
  width: 17px;
  height: 21px;
  border-radius: 0 4px 4px 0;
  background: linear-gradient(#5aa6fb, #1c7cf2);
}
.st-sel {
  margin-left: 6px;
}
.sizegrip {
  position: absolute;
  right: 0;
  bottom: 0;
}
.sizegrip path {
  stroke: #999;
  fill: none;
}
</style>
<style>
html, body { margin: 0; background: #ececec; }
</style>
